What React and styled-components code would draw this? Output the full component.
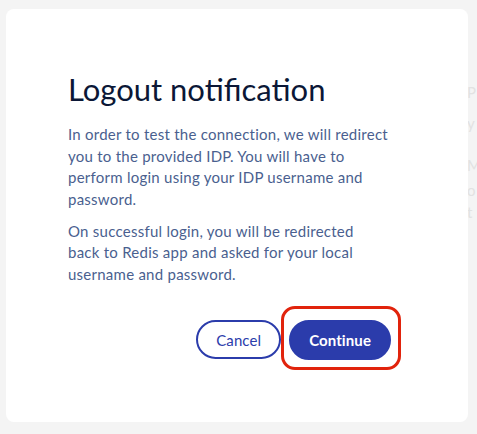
import React from "react";
import styled, { createGlobalStyle } from "styled-components";

const Global = createGlobalStyle`
  html, body { margin: 0; padding: 0; }
  body {
    width: 477px;
    height: 434px;
    overflow: hidden;
    background: #f3f3f3;
    font-family: Lato, "Noto Sans", sans-serif;
  }
`;

const Page = styled.div`
  position: relative;
  width: 477px;
  height: 434px;
  background: #f4f4f4;
  overflow: hidden;
`;

const Backdrop = styled.div`
  display: flex;
  flex-direction: column;
`;

const SideText = styled.div`
  display: flex;
  flex-direction: column;
  align-items: flex-start;
  padding: 80px 0 0 467px;
  color: #e2e2e2;
  font-size: 15px;
  line-height: 24px;
`;

const Ghost = styled.span`
  margin-top: ${(p) => p.$gap || 0}px;
`;

const Modal = styled.div`
  position: absolute;
  left: 6px;
  top: 9px;
  width: 462px;
  height: 413px;
  box-sizing: border-box;
  background: #ffffff;
  border-radius: 8px;
  padding: 62px 77px 0 62px;
  display: flex;
  flex-direction: column;
`;

const Title = styled.h1`
  margin: 0 0 17px;
  font-family: Lato, "Noto Sans", sans-serif;
  font-weight: 400;
  font-size: 31px;
  line-height: 36px;
  color: #0b1736;
  letter-spacing: 0;
`;

const Para = styled.p`
  margin: 0 -10px 10.5px 0;
  font-family: Lato, "Noto Sans", sans-serif;
  font-size: 15px;
  line-height: 21.5px;
  color: #4a5f8f;
  letter-spacing: 0.25px;
`;

const Actions = styled.div`
  display: flex;
  justify-content: flex-end;
  align-items: center;
  gap: 8px;
  margin-top: 24px;
`;

const Button = styled.button`
  box-sizing: border-box;
  height: ${(p) => (p.$primary ? "40px" : "39px")};
  padding: 0 18px;
  border-radius: 20px;
  border: 2px solid #2b3cab;
  background: ${(p) => (p.$primary ? "#2b3cab" : "#ffffff")};
  color: ${(p) => (p.$primary ? "#ffffff" : "#2b3cab")};
  font-family: Lato, "Noto Sans", sans-serif;
  font-size: 15px;
  font-weight: ${(p) => (p.$primary ? 700 : 400)};
  letter-spacing: 0.1px;
  cursor: pointer;
`;

const Highlight = styled.div`
  position: relative;
  display: flex;
  &::after {
    content: "";
    position: absolute;
    left: -8px;
    right: -10px;
    top: -14px;
    bottom: -10px;
    border: 3px solid #e1230c;
    border-radius: 14px;
    pointer-events: none;
  }
`;

export default function App() {
  return (
    <Page>
      <Global />
      <Backdrop>
        <SideText>
          <Ghost>P</Ghost>
          <Ghost $gap={7}>y</Ghost>
          <Ghost $gap={18}>M</Ghost>
          <Ghost $gap={1}>o</Ghost>
          <Ghost $gap={-2}>t</Ghost>
        </SideText>
      </Backdrop>
      <Modal>
        <Title>Logout notification</Title>
        <Para>
          In order to test the connection, we will redirect
          <br />
          you to the provided IDP. You will have to
          <br />
          perform login using your IDP username and
          <br />
          password.
        </Para>
        <Para>
          On successful login, you will be redirected
          <br />
          back to Redis app and asked for your local
          <br />
          username and password.
        </Para>
        <Actions>
          <Button>Cancel</Button>
          <Highlight>
            <Button $primary>Continue</Button>
          </Highlight>
        </Actions>
      </Modal>
    </Page>
  );
}
